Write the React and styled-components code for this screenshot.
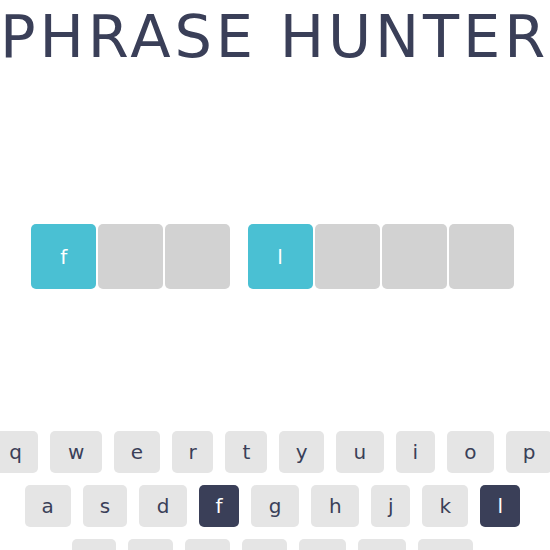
import React from 'react'
import styled, { createGlobalStyle } from 'styled-components'

const GlobalStyle = createGlobalStyle`
  body {
    margin: 0;
    background: #fff;
    overflow: hidden;
    font-family: "DejaVu Sans", "Liberation Sans", sans-serif;
  }
`

const Page = styled.div`
  width: 550px;
  height: 550px;
  overflow: hidden;
  padding-right: 5px;
  box-sizing: border-box;
  display: flex;
  flex-direction: column;
  align-items: center;
`

const Title = styled.h1`
  margin: 7px 0 0 4px;
  font-size: 59px;
  line-height: 1;
  font-weight: 400;
  letter-spacing: 3.9px;
  color: #3a3f58;
  white-space: nowrap;
  text-transform: uppercase;
`

const Phrase = styled.div`
  margin-top: 158px;
  display: flex;
  justify-content: center;
  gap: 17.3px;
`

const Word = styled.div`
  display: flex;
  gap: 2px;
`

const Letter = styled.div`
  width: 65px;
  height: 65px;
  border-radius: 5px;
  display: flex;
  align-items: center;
  justify-content: center;
  font-size: 20px;
  color: #fff;
  background: ${p => (p.$shown ? '#4ac0d3' : '#d2d2d2')};
`

const Keyboard = styled.div`
  margin-top: 142px;
  display: flex;
  flex-direction: column;
  gap: 12px;
  width: 100%;
`

const KeyRow = styled.div`
  display: flex;
  justify-content: center;
  gap: 12.3px;
`

const Key = styled.button`
  flex: none;
  height: 42px;
  padding: 0;
  border: none;
  border-radius: 5px;
  font-family: "DejaVu Sans", sans-serif;
  font-size: 20px;
  background: ${p => (p.$chosen ? '#3a3f58' : '#e5e5e5')};
  color: ${p => (p.$chosen ? '#fff' : '#3a3f58')};
`

// key widths measured per letter
const widths = {
  q: 45, w: 51.7, e: 45.3, r: 41.3, t: 41.7, y: 44.3, u: 47.7, i: 38.7, o: 46.7, p: 46,
  a: 45.7, s: 44, d: 47.7, f: 39.7, g: 48, h: 47.7, j: 38.7, k: 45.7, l: 39.7,
  z: 43.3, x: 44.7, c: 44.7, v: 44.7, b: 46.7, n: 47.7, m: 54.7,
}

const rows = ['qwertyuiop', 'asdfghjkl', 'zxcvbnm']
const phrase = 'fun love'
const guessed = ['f', 'l']

export default function App() {
  return (
    <>
      <GlobalStyle />
      <Page>
        <Title>Phrase Hunter</Title>
        <Phrase>
          {phrase.split(' ').map((word, i) => (
            <Word key={i}>
              {word.split('').map((ch, j) => {
                const shown = guessed.includes(ch)
                return (
                  <Letter key={j} $shown={shown}>
                    {shown ? ch : ''}
                  </Letter>
                )
              })}
            </Word>
          ))}
        </Phrase>
        <Keyboard>
          {rows.map(row => (
            <KeyRow key={row}>
              {row.split('').map(ch => (
                <Key key={ch} $chosen={guessed.includes(ch)} style={{ width: widths[ch] }}>
                  {ch}
                </Key>
              ))}
            </KeyRow>
          ))}
        </Keyboard>
      </Page>
    </>
  )
}
